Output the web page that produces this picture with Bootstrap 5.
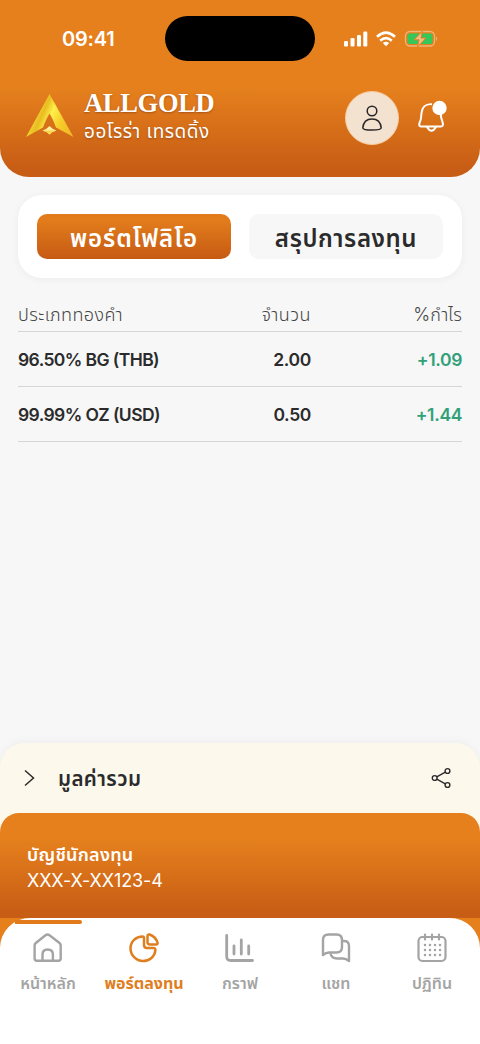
<!DOCTYPE html>
<html lang="th">
<head>
<meta charset="utf-8">
<meta name="viewport" content="width=device-width, initial-scale=1">
<title>ALLGOLD</title>
<link href="https://cdn.jsdelivr.net/npm/bootstrap@5.3.0/dist/css/bootstrap.min.css" rel="stylesheet">
<style>
:root{--or:#e5801d;--deep:#c65a14;--ink:#2b2b2b}
body{width:480px;height:1044px;overflow:hidden;background:#f7f7f7;color:var(--ink);font-family:Inter,"Noto Sans Thai","Noto Sans",sans-serif}
svg{display:block;flex:none}
.lbl{white-space:nowrap}
.top{height:177px;border-radius:0 0 29px 29px;background:linear-gradient(#e5801d 50%,#c85d15 95%);color:#fff}
.status{height:61px;padding-top:16px}
.clock{width:165px;padding-left:62px;font-size:20px;line-height:47px;font-weight:600;letter-spacing:-.2px}
.island{width:150px;height:45px;border-radius:23px;background:#000}
.signals{margin-left:28px;height:46px;gap:8px}
.brandrow{padding:30px 32px 0 25px}
.logo{margin:2px 10px 0 0}
.wordmark{font-family:"Liberation Serif",serif;font-size:26.5px;line-height:26px;font-weight:700;letter-spacing:-.3px;text-shadow:0 1px 2px #7b3a1399;margin-top:-1px}
.tagline{font-size:19px;line-height:28px;letter-spacing:.5px;text-shadow:0 1px 2px #7b3a1399;margin-top:2px}
.avatar{width:54px;height:54px;background:#f4e2d1;border:1px solid #f8c99a}
.bell{margin:8px 0 0 17px}
.switcher{margin:18px 18px 0;height:83px;padding:19px;gap:18px;border-radius:24px;background:#fff;box-shadow:0 1px 8px #0000000d}
.tab-btn{width:194px;height:45px;padding:2px 0 0;border:0;border-radius:10px;background:#f7f7f7;color:var(--ink);font-size:24px;font-weight:600;line-height:45px;letter-spacing:.6px}
.tab-btn.on{background:linear-gradient(#e27c1b 15%,#c65a14);color:#fff;letter-spacing:.95px}
.holdings{margin:18px 18px 0}
.hrow{height:55px;padding-top:2px;border-bottom:1px solid #d6d6d8;font-size:17.5px;font-weight:600;letter-spacing:-.35px}
.hrow .c1{letter-spacing:-.6px}
.hrow.head-row{height:36px;font-size:18px;font-weight:300;letter-spacing:.1px;color:#444}
.hrow.head-row .c1{letter-spacing:.4px}
.hrow.head-row .c2{letter-spacing:.5px}
.c1{width:180px}.c2{width:113px;text-align:right}.c3{flex:1;text-align:right}
.gain{color:#32a17a}
.total{height:100px;margin-bottom:-30px;padding:0 29px 30px 24px;border-radius:25px 25px 0 0;background:#fcf8eb;box-shadow:0 -3px 9px #00000008}
.total-name{font-size:20.500px;font-weight:600;letter-spacing:.4px;margin:2px 0 0 23px}
.account{height:105px;border-radius:19px 19px 0 0;padding:29px 27px 0;background:linear-gradient(#e5801d 25%,#c85d15 95%);color:#fff;position:relative}
.acct-name{font-size:18px;line-height:26px;font-weight:600;letter-spacing:.25px}
.acct-no{font-size:18px;line-height:25px;letter-spacing:-.1px}
.dock{height:126px;background:var(--or)}
.dock-in{height:126px;background:#fff;border-radius:30px 30px 0 0;position:relative;padding-top:14px}
.marker{position:absolute;left:15px;top:2px;width:67px;height:4px;border-radius:0 3px 3px 0;background:#e07a1b}
.item{width:96px;color:#a4a4a4;font-size:16px;font-weight:600;line-height:24px;gap:7px}
.item.on{color:#df7e1f;font-weight:700}
</style>
</head>
<body class="d-flex flex-column">
<header class="top">
  <div class="status d-flex">
    <div class="clock">09:41</div>
    <div class="island"></div>
    <div class="signals d-flex align-items-center">
      <svg width="25" height="16" viewBox="0 0 25 16" fill="#fff"><rect x="1" y="10" width="4" height="5.5" rx="1.2"/><rect x="7.5" y="7" width="4" height="8.5" rx="1.2"/><rect x="14" y="4" width="4" height="11.5" rx="1.2"/><rect x="20.3" y=".5" width="4" height="15" rx="1.2"/></svg>
      <svg width="20" height="16" viewBox="0 0 20 16" fill="none" stroke="#fff" stroke-width="2.7"><path d="M1 5.800Q10-2.500 19 5.800M4.200 9.700Q10 4.700 15.800 9.700"/><path d="M6.800 12Q10 9.500 13.200 12L10 15.300Z" fill="#fff" stroke="none"/></svg>
      <svg width="34" height="18" viewBox="0 0 34 18"><rect x="1.500" y="1.500" width="29" height="14.500" rx="4.500" fill="none" stroke="#efb376" stroke-width="1.300"/><rect x="3.500" y="3.500" width="25" height="10.500" rx="2.500" fill="#34c759"/><path d="M32 6.500q2.400 2.200 0 4.500z" fill="#efb376"/><path d="M18.500 1L10 9.800h5L13.500 17 22 8h-5z" fill="#f3bd87" stroke="#e5801d" stroke-width="1"/></svg>
    </div>
  </div>
  <div class="brandrow d-flex">
    <svg class="logo" width="49" height="46" viewBox="0 0 49 46">
      <defs><linearGradient id="g" x1="0" y1=".3" x2="1" y2=".7"><stop stop-color="#fff38a"/><stop offset=".2" stop-color="#f6d634"/><stop offset=".36" stop-color="#e8bd22"/><stop offset=".52" stop-color="#fff04b"/><stop offset=".75" stop-color="#f6cd2a"/><stop offset="1" stop-color="#f0b928"/></linearGradient></defs>
      <path d="M24.500 1L48.500 44L31 34.500Q27.500 25 24.500 20.500Q21.500 25 18 34.500L1 44Z" fill="url(#g)"/><path d="M17.500 37.500Q22 36 24.500 33Q27 36 31.500 37.500Q27 38.500 24.500 41.500Q22 38.500 17.500 37.500Z" fill="#fff0a0"/><path d="M17.500 37.500H31.500Q27 38.500 24.500 41.500Q22 38.500 17.500 37.500Z" fill="#f9d547"/>
    </svg>
    <div><div class="wordmark lbl"><span>ALLGOLD</span></div><div class="tagline lbl"><span>ออโรร่า เทรดดิ้ง</span></div></div>
    <div class="avatar rounded-circle ms-auto d-flex align-items-center justify-content-center">
      <svg width="22" height="28" viewBox="0 0 22 28" fill="none" stroke="#292627" stroke-width="1.5"><circle cx="11" cy="7" r="4.800"/><path d="M1.800 23.700C2.500 17.500 6 15 11 15s8.500 2.500 9.200 8.700Q20.200 26 11 26T1.800 23.700Z"/></svg>
    </div>
    <svg class="bell" width="32" height="34" viewBox="0 0 32 34" fill="none" stroke="#fff" stroke-width="2" stroke-linejoin="round"><path d="M16 5.200C9 4.500 6 9 5.500 14L5 19Q4.800 21 3.500 24Q2.500 27.500 5 27.500H25Q27.500 27.500 26.800 24L25 18V15M11 28q4.500 7.500 9 0"/><circle cx="23.500" cy="9" r="7.200" fill="#fff" stroke="none"/></svg>
  </div>
</header>

<div class="switcher d-flex">
  <button class="btn tab-btn on"><span class="lbl">พอร์ตโฟลิโอ</span></button>
  <button class="btn tab-btn"><span class="lbl">สรุปการลงทุน</span></button>
</div>

<main class="holdings flex-grow-1">
  <div class="hrow head-row d-flex align-items-center"><div class="c1"><span>ประเภททองคำ</span></div><div class="c2"><span>จำนวน</span></div><div class="c3"><span>%กำไร</span></div></div>
  <div class="hrow d-flex align-items-center"><div class="c1"><span>96.50% BG (THB)</span></div><div class="c2"><span>2.00</span></div><div class="c3 gain"><span>+1.09</span></div></div>
  <div class="hrow d-flex align-items-center"><div class="c1"><span>99.99% OZ (USD)</span></div><div class="c2"><span>0.50</span></div><div class="c3 gain"><span>+1.44</span></div></div>
</main>

<section class="total d-flex align-items-center">
  <svg width="11" height="18" viewBox="0 0 11 18" fill="none" stroke="#2b2b2b" stroke-width="1.5"><path d="M1 1.500l8.500 7.500L1 16.500"/></svg>
  <div class="total-name"><span>มูลค่ารวม</span></div>
  <svg class="ms-auto" width="20" height="22" viewBox="0 0 20 22" fill="none" stroke="#2b2b2b" stroke-width="1.400"><circle cx="3.700" cy="11" r="2.400"/><circle cx="16.500" cy="4" r="2.400"/><circle cx="16.500" cy="18" r="2.400"/><path d="M5.800 9.800L14.300 5.200M5.800 12.200L14.300 16.800"/></svg>
</section>
<section class="account"><div class="acct-name"><span>บัญชีนักลงทุน</span></div><div class="acct-no"><span>XXX-X-XX123-4</span></div></section>

<footer class="dock">
  <nav class="dock-in d-flex">
    <div class="marker"></div>
    <div class="item d-flex flex-column align-items-center"><svg width="32" height="32" viewBox="0 0 32 32" fill="none" stroke="currentColor" stroke-width="2.400" stroke-linejoin="round"><path d="M2.600 13.500Q2.600 12 3.800 11L13.500 3.200Q15.500 1.700 17.500 3.200L27.500 11Q28.700 12 28.700 13.500V26.500Q28.700 28.700 26.500 28.700H4.800Q2.600 28.700 2.600 26.500ZM10.500 28.700V22.500q0-5 5.200-5t5.200 5v6.200"/></svg><span>หน้าหลัก</span></div>
    <div class="item on d-flex flex-column align-items-center"><svg width="32" height="32" viewBox="0 0 32 32" fill="none" stroke="currentColor" stroke-width="2.500" stroke-linejoin="round"><path d="M14.500 4.500C8 4.500 2.500 9.500 2.500 16.300S8 29 15 29c6.500 0 12-4.500 12.400-11 0-2-1-2-2.400-2h-6q-3 0-3-3V6q0-1.500-1.500-1.500Z"/><path d="M19.500 4Q19.500 2 21.500 2.500 28 5 29.500 10.500q.5 2-1.500 2h-6q-2.500 0-2.500-2.500Z"/></svg><span>พอร์ตลงทุน</span></div>
    <div class="item d-flex flex-column align-items-center"><svg width="32" height="32" viewBox="0 0 32 32" fill="none" stroke="currentColor" stroke-width="2.800" stroke-linecap="round"><path d="M2.700 3.500V24.500q0 4 4 4H28.500M10 14v8M17.300 8v14M24.700 14v8"/></svg><span>กราฟ</span></div>
    <div class="item d-flex flex-column align-items-center"><svg width="32" height="32" viewBox="0 0 32 32" fill="none" stroke="currentColor" stroke-width="2.400" stroke-linejoin="round"><path d="M3 23V8q0-5.500 5.500-5.500h8Q22 2.500 22 8v7q0 5.500-5.500 5.500H9Q6 20.500 3 23Z"/><path d="M23 9q6-.5 6 5V29q-3-2.500-6-2.500h-6q-5.500 0-6.500-5"/></svg><span>แชท</span></div>
    <div class="item d-flex flex-column align-items-center"><svg width="32" height="32" viewBox="0 0 32 32" fill="none" stroke="currentColor" stroke-width="2.200" stroke-linecap="round"><rect x="2.500" y="5" width="27" height="24" rx="4"/><path d="M9 2.500v5M16 2.500v5M23 2.500v5"/><path d="M9 13h.01M14 13h.01M19 13h.01M24 13h.01M9 18h.01M14 18h.01M19 18h.01M24 18h.01M9 23h.01M14 23h.01M19 23h.01M24 23h.01" stroke-width="2.500"/></svg><span>ปฏิทิน</span></div>
  </nav>
</footer>
<script src="https://cdn.jsdelivr.net/npm/bootstrap@5.3.0/dist/js/bootstrap.bundle.min.js"></script>
</body>
</html>
